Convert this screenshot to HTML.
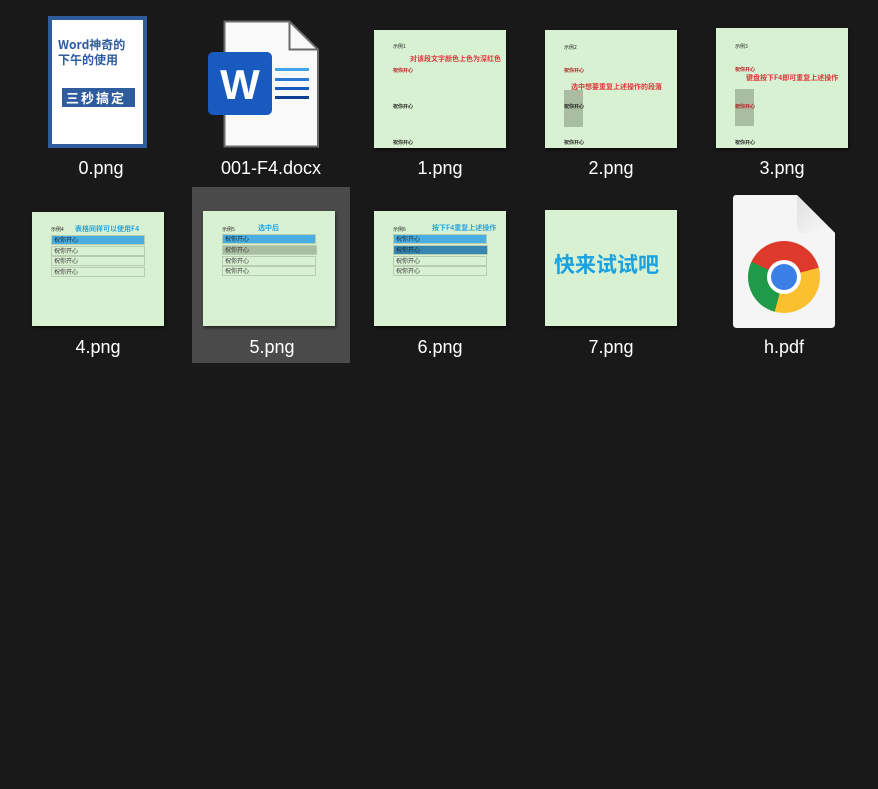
<!DOCTYPE html>
<html><head><meta charset="utf-8"><style>
*{margin:0;padding:0;box-sizing:border-box}
body{width:878px;height:789px;background:#191919;position:relative;overflow:hidden;font-family:"Segoe UI","Liberation Sans","Noto Sans CJK SC",sans-serif}
.a{position:absolute}
.lbl{position:absolute;color:#fff;font-size:18px;text-align:center;width:160px;line-height:22px}
.g{background:#d8f1d2;position:absolute;box-shadow:1px 2px 3px rgba(0,0,0,.5)}
.t{position:absolute;font-family:"Noto Sans CJK SC",sans-serif;font-weight:bold;white-space:nowrap}
.s{position:absolute;font-size:5px;color:#222;font-family:"Noto Sans CJK SC",sans-serif;white-space:nowrap}
.row{position:absolute;height:10px;border:1px solid #b8cdb0;font-size:6px;color:#333;font-family:"Noto Sans CJK SC",sans-serif;padding-left:2px;line-height:8px}
</style></head><body>

<!-- 0.png -->
<div class="a" style="left:48px;top:16px;width:99px;height:132px;background:#fff;border:4px solid #2f5c9e"></div>
<div class="t" style="left:58px;top:37px;font-size:12px;color:#2f5c9e;line-height:15px">Word神奇的<br>下午的使用</div>
<div class="a" style="left:62px;top:88px;width:73px;height:19px;background:#2f5c9e"></div>
<div class="t" style="left:66px;top:88px;font-size:13px;color:#fff;line-height:19px;letter-spacing:2px">三秒搞定</div>
<div class="lbl" style="left:21px;top:157px">0.png</div>

<!-- docx -->
<svg class="a" style="left:200px;top:15px" width="125" height="140">
<path d="M24.5 6.5 H89.5 L118 34.5 V131.5 H24.5 Z" fill="#f9f9f9" stroke="#6a6a6a" stroke-width="2"/>
<path d="M89.5 6.5 V34.5 H118" fill="none" stroke="#6a6a6a" stroke-width="2"/>
<rect x="8" y="37" width="64" height="63" rx="5" fill="#185abd"/>
<text x="40" y="84" text-anchor="middle" font-family="Liberation Sans" font-weight="bold" font-size="42" fill="#fff">W</text>
<rect x="75" y="53" width="34" height="3" fill="#41a5ee"/>
<rect x="75" y="63" width="34" height="3" fill="#2b7cd3"/>
<rect x="75" y="72" width="34" height="3" fill="#185abd"/>
<rect x="75" y="81" width="34" height="3" fill="#103f91"/>
</svg>
<div class="lbl" style="left:191px;top:157px">001-F4.docx</div>

<!-- 1.png -->
<div class="g" style="left:374px;top:30px;width:132px;height:118px"></div>
<div class="s" style="left:393px;top:43px">示例1</div>
<div class="t" style="left:410px;top:54px;font-size:7px;color:#e0353a">对该段文字颜色上色为深红色</div>
<div class="t" style="left:393px;top:67px;font-size:5px;color:#b02020">祝你开心</div>
<div class="t" style="left:393px;top:103px;font-size:5px;color:#222">祝你开心</div>
<div class="t" style="left:393px;top:139px;font-size:5px;color:#222">祝你开心</div>
<div class="lbl" style="left:360px;top:157px">1.png</div>

<!-- 2.png -->
<div class="g" style="left:545px;top:30px;width:132px;height:118px"></div>
<div class="s" style="left:564px;top:44px">示例2</div>
<div class="t" style="left:564px;top:67px;font-size:5px;color:#b02020">祝你开心</div>
<div class="a" style="left:564px;top:90px;width:19px;height:37px;background:#a9bda0"></div>
<div class="t" style="left:571px;top:82px;font-size:7px;color:#e0353a">选中想要重复上述操作的段落</div>
<div class="t" style="left:564px;top:103px;font-size:5px;color:#222">祝你开心</div>
<div class="t" style="left:564px;top:139px;font-size:5px;color:#222">祝你开心</div>
<div class="lbl" style="left:531px;top:157px">2.png</div>

<!-- 3.png -->
<div class="g" style="left:716px;top:28px;width:132px;height:120px"></div>
<div class="s" style="left:735px;top:43px">示例3</div>
<div class="t" style="left:735px;top:66px;font-size:5px;color:#b02020">祝你开心</div>
<div class="t" style="left:746px;top:73px;font-size:7px;color:#e0353a">键盘按下F4即可重复上述操作</div>
<div class="a" style="left:735px;top:89px;width:19px;height:37px;background:#a9bda0"></div>
<div class="t" style="left:735px;top:103px;font-size:5px;color:#b02020">祝你开心</div>
<div class="t" style="left:735px;top:139px;font-size:5px;color:#222">祝你开心</div>
<div class="lbl" style="left:702px;top:157px">3.png</div>

<!-- 4.png -->
<div class="g" style="left:32px;top:212px;width:132px;height:114px"></div>
<div class="s" style="left:51px;top:226px">示例4</div>
<div class="t" style="left:75px;top:224px;font-size:7px;color:#2aa5dc">表格同样可以使用F4</div>
<div class="row" style="left:51px;top:235px;width:94px;background:#4aaee0;color:#123">祝你开心</div>
<div class="row" style="left:51px;top:246px;width:94px">祝你开心</div>
<div class="row" style="left:51px;top:256px;width:94px">祝你开心</div>
<div class="row" style="left:51px;top:267px;width:94px">祝你开心</div>
<div class="lbl" style="left:18px;top:336px">4.png</div>

<!-- 5.png selected -->
<div class="a" style="left:192px;top:187px;width:158px;height:176px;background:#4a4a4a"></div>
<div class="g" style="left:203px;top:211px;width:132px;height:115px"></div>
<div class="s" style="left:222px;top:226px">示例5</div>
<div class="t" style="left:258px;top:223px;font-size:7px;color:#2aa5dc">选中后</div>
<div class="row" style="left:222px;top:234px;width:94px;background:#4aaee0;color:#123">祝你开心</div>
<div class="row" style="left:222px;top:245px;width:95px;background:#a9bda0">祝你开心</div>
<div class="row" style="left:222px;top:256px;width:94px">祝你开心</div>
<div class="row" style="left:222px;top:266px;width:94px">祝你开心</div>
<div class="lbl" style="left:192px;top:336px">5.png</div>

<!-- 6.png -->
<div class="g" style="left:374px;top:211px;width:132px;height:115px"></div>
<div class="s" style="left:393px;top:226px">示例6</div>
<div class="t" style="left:432px;top:223px;font-size:7px;color:#2aa5dc">按下F4重复上述操作</div>
<div class="row" style="left:393px;top:234px;width:94px;background:#4aaee0;color:#123">祝你开心</div>
<div class="row" style="left:393px;top:245px;width:95px;background:#3587b0;color:#123">祝你开心</div>
<div class="row" style="left:393px;top:256px;width:94px">祝你开心</div>
<div class="row" style="left:393px;top:266px;width:94px">祝你开心</div>
<div class="lbl" style="left:360px;top:336px">6.png</div>

<!-- 7.png -->
<div class="g" style="left:545px;top:210px;width:132px;height:116px"></div>
<div class="t" style="left:554px;top:249px;font-size:21px;color:#1aa1e0">快来试试吧</div>
<div class="lbl" style="left:531px;top:336px">7.png</div>

<!-- h.pdf -->
<svg class="a" style="left:725px;top:190px" width="120" height="145">
<defs><linearGradient id="fd" x1="0" y1="0" x2="1" y2="1"><stop offset="0" stop-color="#e0e0e0"/><stop offset="1" stop-color="#fafafa"/></linearGradient></defs>
<path d="M11 5 H72 L110 43 V134 Q110 138 106 138 H12 Q8 138 8 134 V9 Q8 5 11 5Z" fill="#f5f5f5"/>
<path d="M72 5 V37 Q72 43 78 43 H110 Z" fill="url(#fd)"/>
</svg>
<div class="a" style="left:748px;top:241px;width:72px;height:72px;border-radius:50%;background:conic-gradient(from 0deg,#dd3a2c 0deg,#dd3a2c 75deg,#fbc02d 75deg,#fbc02d 195deg,#1e9a48 195deg,#1e9a48 295deg,#dd3a2c 295deg)"></div>
<div class="a" style="left:767px;top:260px;width:34px;height:34px;border-radius:50%;background:#fff"></div>
<div class="a" style="left:771px;top:264px;width:26px;height:26px;border-radius:50%;background:#3b7fe6"></div>
<div class="lbl" style="left:704px;top:336px">h.pdf</div>

</body></html>
